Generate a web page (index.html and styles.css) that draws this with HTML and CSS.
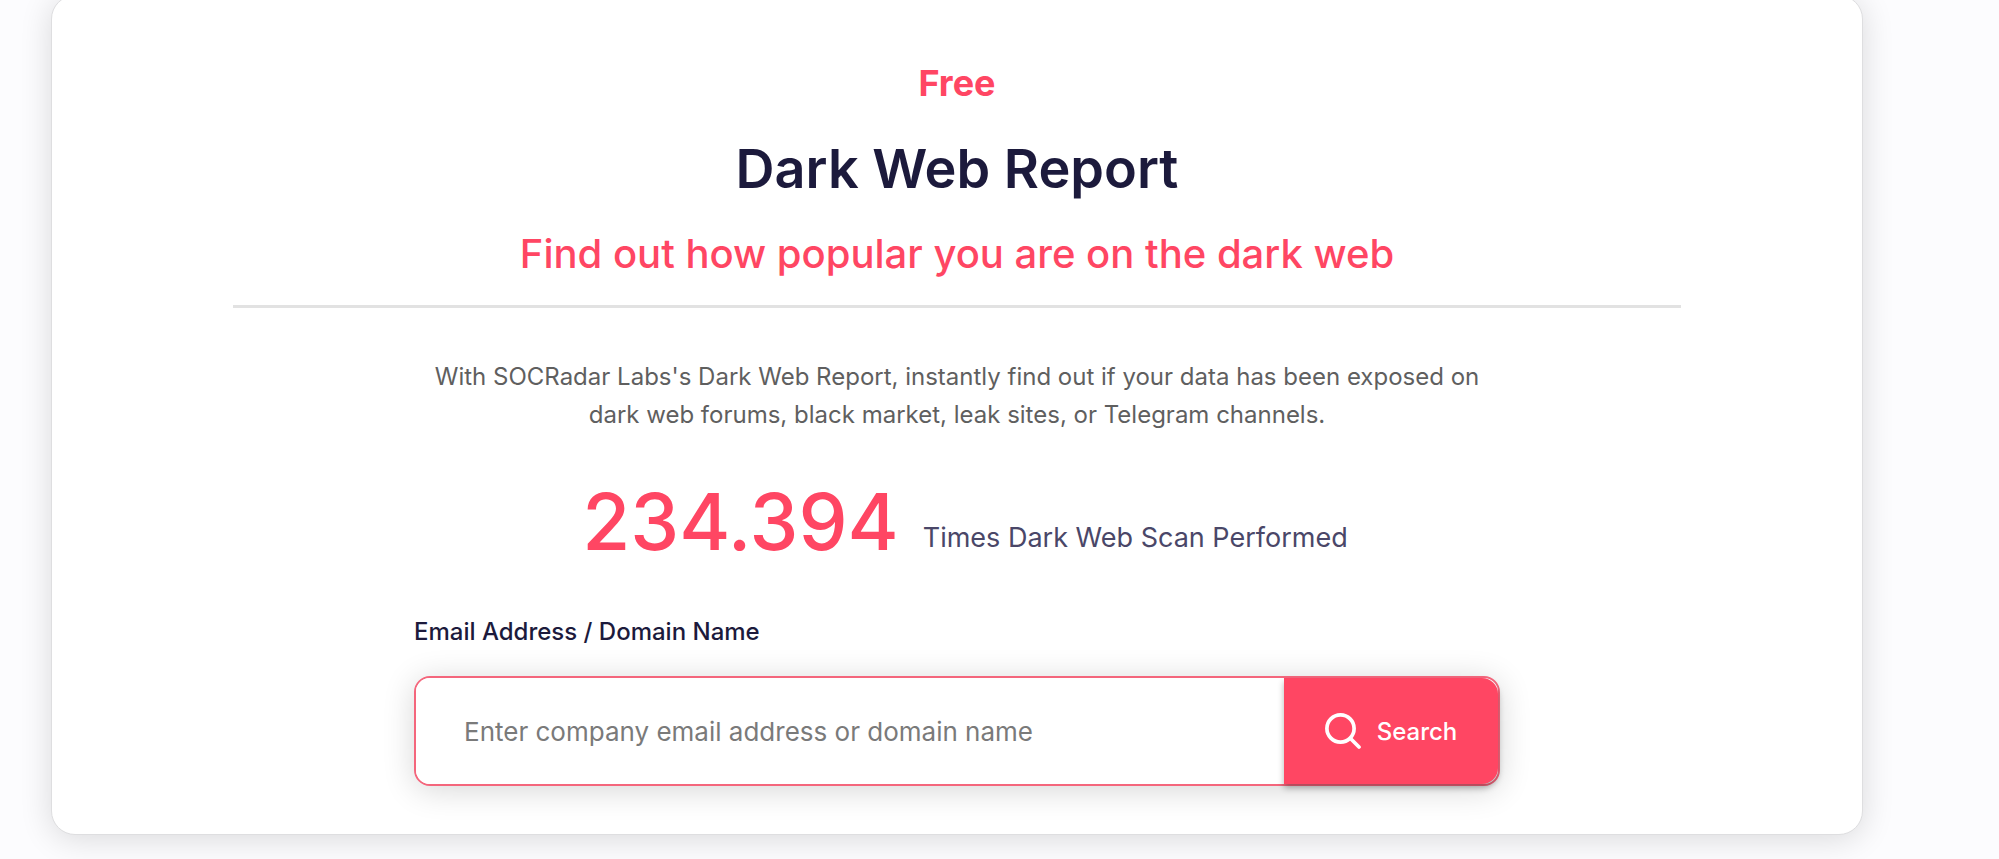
FILE: index.html
```html
<!DOCTYPE html>
<html lang="en">
<head>
<meta charset="utf-8">
<title>Dark Web Report</title>
<link rel="stylesheet" href="styles.css">
</head>
<body>
<main class="card">
  <header class="head">
    <p class="eyebrow">Free</p>
    <h1 class="title">Dark Web Report</h1>
    <h2 class="subtitle">Find out how popular you are on the dark web</h2>
  </header>
  <div class="content">
    <p class="intro">With SOCRadar Labs's Dark Web Report, instantly find out if your data has been exposed on dark web forums, black market, leak sites, or Telegram channels.</p>
    <p class="stat"><strong class="count">234.394</strong><span class="caption">Times Dark Web Scan Performed</span></p>
    <form class="form">
      <label class="label" for="query">Email Address / Domain Name</label>
      <div class="search">
        <input class="field" id="query" type="text" placeholder="Enter company email address or domain name">
        <button class="submit" type="submit">
          <svg class="icon" viewBox="0 0 36 36" fill="none" stroke="currentColor" stroke-width="3.7" stroke-linecap="round" aria-hidden="true"><circle cx="15.500" cy="15.500" r="13.600"/><path d="M25.500 25.500L34 34"/></svg>
          <span>Search</span>
        </button>
      </div>
    </form>
  </div>
</main>
</body>
</html>
```
FILE: styles.css
```css
* { box-sizing: border-box; }

body {
  margin: 0;
  padding: 0 136px 24px 51px;
  background: #fcfcfe;
  font-family: Inter, "Liberation Sans", sans-serif;
  color: #1c1a3c;
  display: flow-root;
}

.card {
  margin-top: -5px;
  padding: 63px 10% 48px;
  background: #fff;
  border: 1px solid #dedee0;
  border-radius: 24px;
  box-shadow: 0 4px 32px rgba(0, 0, 0, 0.14);
  text-align: center;
}

p, h1, h2 { margin: 0; }

.head { border-bottom: 3px solid #e2e2e2; }

.eyebrow {
  font-size: 36px;
  line-height: 48px;
  font-weight: 700;
  color: #ff4663;
}

.title {
  margin-top: 26px;
  font-size: 54px;
  line-height: 72px;
  font-weight: 600;
}

.subtitle {
  padding: 22px 0 24px;
  font-size: 40px;
  line-height: 54px;
  font-weight: 500;
  color: #ff4663;
}

.content {
  max-width: 1086px;
  margin: 0 auto;
}

.intro {
  margin-top: 50px;
  font-size: 24px;
  line-height: 38px;
  color: #5f5f5f;
}

.stat {
  margin-top: 36px;
  padding-left: 16px;
  display: flex;
  justify-content: center;
  align-items: flex-end;
  gap: 24px;
}

.count {
  font-size: 78px;
  line-height: 104px;
  font-weight: 500;
  color: #ff4663;
}

.caption {
  padding-bottom: 16px;
  font-size: 27px;
  line-height: 40px;
  color: #4a4768;
}

.form { margin-top: 42px; }

.label {
  display: block;
  font-size: 24px;
  line-height: 32px;
  font-weight: 500;
  text-align: left;
}

.search {
  display: flex;
  height: 110px;
  margin-top: 28px;
  border: 2px solid #f4667c;
  border-radius: 16px;
  background: #fff;
  box-shadow: 0 4px 32px rgba(0, 0, 0, 0.16);
}

.field {
  flex: 1;
  min-width: 0;
  padding: 0 48px;
  border: 0;
  border-radius: 14px 0 0 14px;
  background: #fff;
  font: inherit;
  font-size: 26px;
  color: #1c1a3c;
}

.field::placeholder { color: #7a7a7a; opacity: 1; }

.submit {
  display: flex;
  align-items: center;
  justify-content: center;
  gap: 16px;
  width: 214px;
  border: 0;
  border-radius: 0 16px 16px 0;
  background: #ff4663;
  box-shadow: 0 4px 6px rgba(0, 0, 0, 0.3);
  font: inherit;
  font-size: 24px;
  font-weight: 500;
  color: #fff;
}

.icon { width: 36px; height: 36px; }
```
